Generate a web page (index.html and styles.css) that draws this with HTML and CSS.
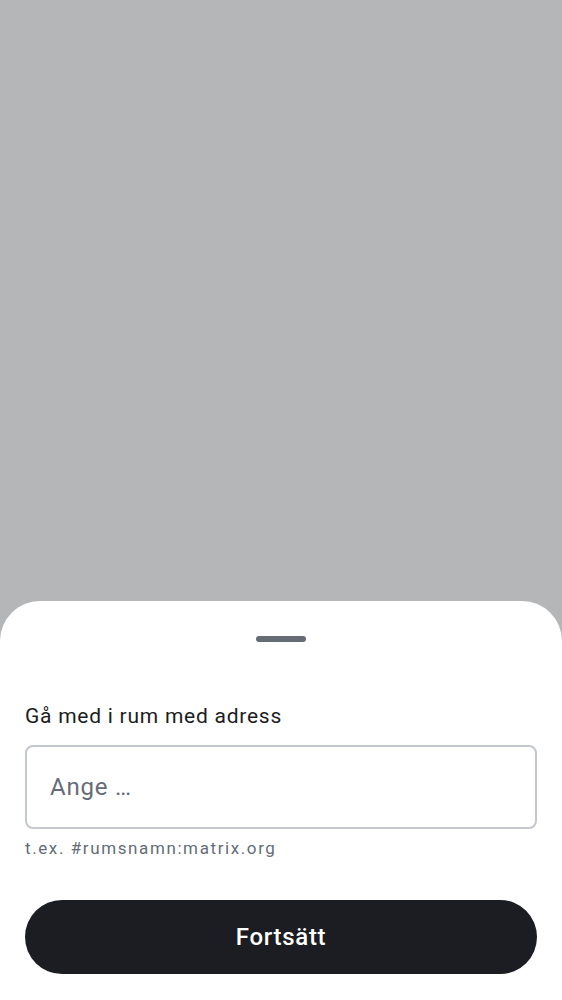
FILE: index.html
```html
<!DOCTYPE html>
<html lang="sv">
<head>
<meta charset="utf-8">
<link rel="stylesheet" href="styles.css">
</head>
<body>
<div class="screen">
  <div class="scrim"></div>
  <div class="sheet">
    <div class="handle"></div>
    <label class="label" for="addr">Gå med i rum med adress</label>
    <div class="field">
      <input id="addr" class="input" type="text" placeholder="Ange …">
    </div>
    <div class="hint">t.ex. #rumsnamn:matrix.org</div>
    <button class="btn" type="button">Fortsätt</button>
  </div>
</div>
</body>
</html>
```
FILE: styles.css
```css
* { box-sizing: border-box; }
html, body { margin: 0; padding: 0; height: 100%; }
body {
  font-family: Roboto, "Liberation Sans", sans-serif;
  background: #b5b6b8;
}
.screen {
  height: 1000px;
  display: flex;
  flex-direction: column;
}
.scrim { flex: 1; }
.sheet {
  background: #ffffff;
  border-radius: 40px 40px 0 0;
  height: 399px;
  padding: 35px 25px 26px;
  display: flex;
  flex-direction: column;
}
.handle {
  align-self: center;
  width: 50px;
  height: 6px;
  border-radius: 3px;
  background: #656c76;
}
.label {
  margin-top: 62px;
  font-size: 21px;
  line-height: 25px;
  letter-spacing: 0.75px;
  color: #1b1d22;
}
.field {
  margin-top: 16px;
  height: 84px;
  border: 2px solid #c4c7cc;
  border-radius: 8px;
  display: flex;
  align-items: center;
  padding: 0 23px;
}
.input {
  border: none;
  outline: none;
  width: 100%;
  font-family: Roboto, "Liberation Sans", sans-serif;
  font-size: 24px;
  line-height: 28px;
  letter-spacing: 0.8px;
  padding: 0;
  color: #1b1d22;
  background: transparent;
}
.input::placeholder { color: #656c76; }
.hint {
  margin-top: 8px;
  font-size: 17px;
  line-height: 23px;
  letter-spacing: 1.6px;
  color: #656c76;
}
.btn {
  margin-top: auto;
  height: 74px;
  border: none;
  border-radius: 37px;
  background: #1b1d22;
  color: #ffffff;
  font-family: Roboto, "Liberation Sans", sans-serif;
  font-size: 24px;
  font-weight: 500;
  letter-spacing: 0.7px;
}
```
